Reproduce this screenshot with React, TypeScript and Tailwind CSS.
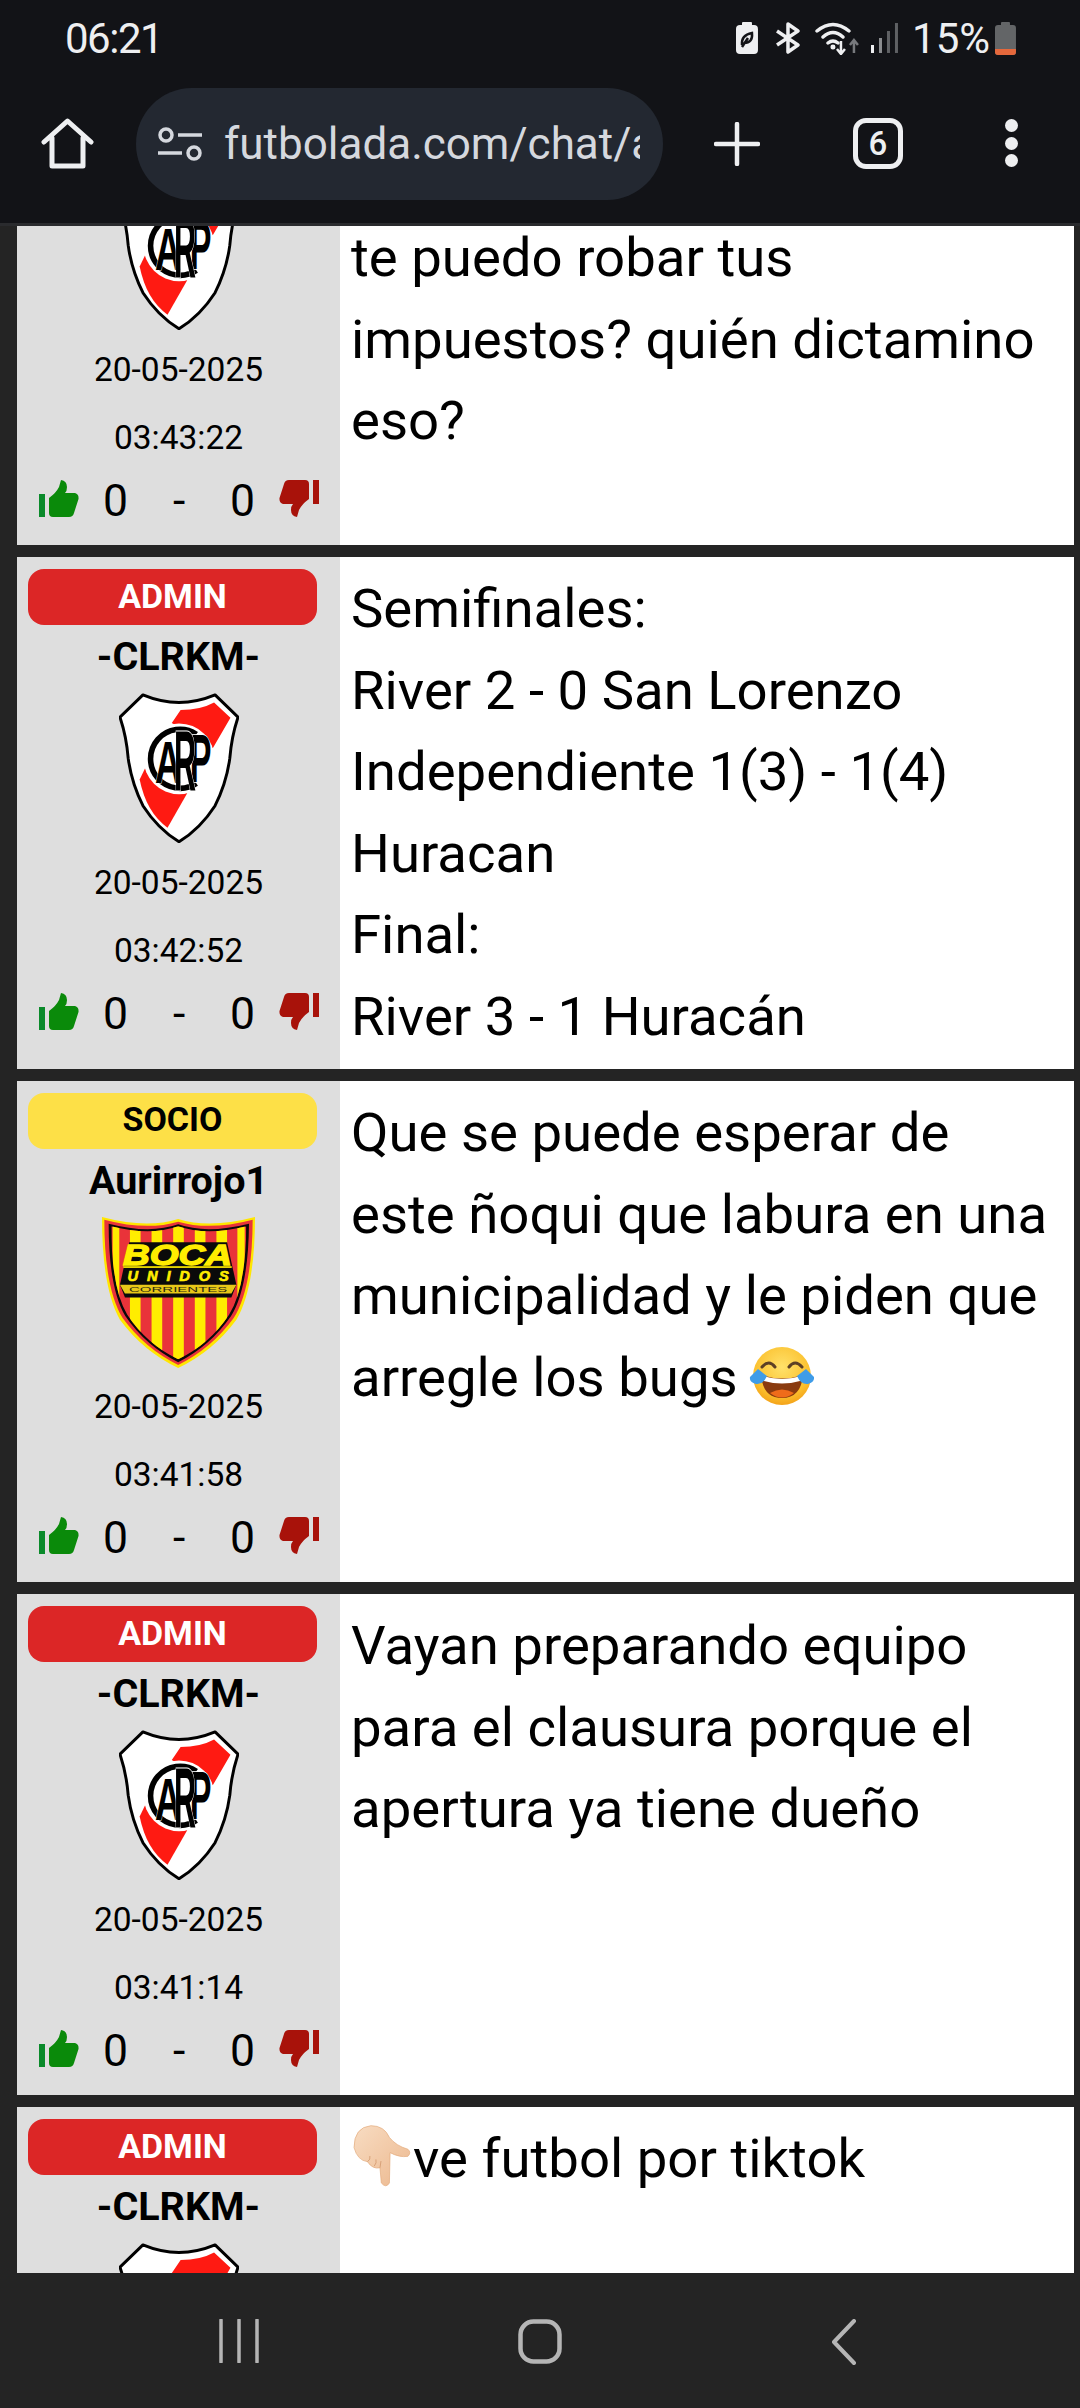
import React from 'react';

type Post = {
  role: 'ADMIN' | 'SOCIO';
  user: string;
  club: 'river' | 'boca';
  time: string;
  lines: React.ReactNode[];
  textTop?: string;
};

const RiverShield = () => (
  <svg width="120" height="150" viewBox="82 37 366 456">
    <path d="M155 42 Q265 88 375 42 L445 110 Q425 170 420 235 Q410 310 375 380 Q330 450 265 490 Q200 450 155 380 Q120 310 110 235 Q105 170 85 110 Z" fill="#fff" stroke="#000" strokeWidth="9" strokeLinejoin="round" />
    <path d="M270 88 Q330 88 372 65 L422 112 L368 205 L243 128 Z" fill="#ff1a12" />
    <path d="M162 265 L290 342 L230 447 Q165 400 145 300 Z" fill="#ff1a12" />
    <circle cx="265" cy="237" r="108" fill="#fff" />
    <path d="M318 162 A90 90 0 1 0 318 312" fill="none" stroke="#000" strokeWidth="17" />
    <g fontFamily="'Liberation Sans', sans-serif" fontWeight="700" fill="#000" stroke="#fff" strokeWidth="3" paintOrder="stroke">
      <text x="0" y="0" fontSize="150" transform="translate(192 310) scale(0.74 1.2)">A</text>
      <text x="0" y="0" fontSize="150" transform="translate(298 308) scale(0.66 1.4)">P</text>
      <text x="0" y="0" fontSize="150" transform="translate(250 332) scale(0.62 1.72)">R</text>
    </g>
  </svg>
);

const BocaShield = () => (
  <svg width="155" height="153" viewBox="33 33 466 460">
    <defs>
      <clipPath id="bocaInner">
        <path d="M64 64 Q180 94 265 64 Q350 94 470 64 Q468 250 418 330 Q360 418 265 464 Q170 418 112 330 Q64 250 64 64 Z" />
      </clipPath>
    </defs>
    <path d="M36 36 Q170 72 265 42 Q360 72 496 36 Q496 250 440 345 Q370 440 265 490 Q160 440 90 345 Q36 250 36 36 Z" fill="#ffe600" />
    <path d="M43 44 Q170 78 265 50 Q360 78 489 44 Q488 250 432 340 Q365 432 265 481 Q165 432 98 340 Q43 250 43 44 Z" fill="#e9333a" />
    <path d="M56 56 Q180 88 265 58 Q350 88 478 56 Q476 250 424 334 Q362 424 265 473 Q168 424 106 334 Q56 250 56 56 Z" fill="#0a0a0a" />
    <g clipPath="url(#bocaInner)">
      <rect x="60" y="60" width="420" height="420" fill="#e9333a" />
      <rect x="68" y="60" width="20" height="420" fill="#ffed00" />
      <rect x="120" y="60" width="32" height="420" fill="#ffed00" />
      <rect x="185" y="60" width="32" height="420" fill="#ffed00" />
      <rect x="250" y="60" width="32" height="420" fill="#ffed00" />
      <rect x="315" y="60" width="32" height="420" fill="#ffed00" />
      <rect x="380" y="60" width="32" height="420" fill="#ffed00" />
      <rect x="443" y="60" width="22" height="420" fill="#ffed00" />
    </g>
    <path d="M118 112 H412 L440 240 L425 278 H105 L90 240 Z" fill="#0a0a0a" />
    <rect x="100" y="184" width="326" height="5" fill="#ffed00" />
    <path d="M90 240 H440 L425 266 H105 Z" fill="#e8c818" />
    <g fontFamily="'Liberation Sans', sans-serif" fontWeight="700" fontStyle="italic" textAnchor="middle" fill="#ffed00" stroke="#ffed00">
      <text x="263" y="179" fontSize="88" strokeWidth="4" textLength="328" lengthAdjust="spacingAndGlyphs">BOCA</text>
      <text x="265" y="229" fontSize="44" strokeWidth="2" textLength="304" lengthAdjust="spacing">UNIDOS</text>
    </g>
    <text x="265" y="263" fontFamily="'Liberation Sans', sans-serif" fontSize="24" fill="#2a2a10" textAnchor="middle" textLength="296" lengthAdjust="spacingAndGlyphs">CORRIENTES</text>
  </svg>
);

const ThumbUp = () => (
  <svg width="40" height="37" viewBox="0 0 40 37">
    <rect x="0" y="14" width="6" height="23" fill="#0a8a2a" />
    <path d="M10 18 Q17 13 20 7 L22 0 Q28 1 28 7 Q28 11 26 13 L36 13 Q40 14 39.500 19 L35 33 Q34 37 30 37 L14 37 Q10 37 10 33 Z" fill="#0a8a0a" />
  </svg>
);

const ThumbDown = () => (
  <svg width="40" height="37" viewBox="0 0 40 37">
    <rect x="34" y="0" width="6" height="24" fill="#a8120a" />
    <path d="M30 19 Q23 24 20 30 L18 37 Q12 36 12 30 Q12 26 14 24 L4 24 Q0 23 0.500 18 L5 4 Q6 0 10 0 L26 0 Q30 0 30 4 Z" fill="#a8120a" />
  </svg>
);

const LaughEmoji = () => (
  <svg width="66" height="60" viewBox="0 0 66 60" className="-ml-[2px] inline-block align-[-10px]">
    <defs>
      <radialGradient id="laughFace" cx="50%" cy="35%" r="70%">
        <stop offset="0%" stopColor="#ffe16a" />
        <stop offset="70%" stopColor="#fbc02d" />
        <stop offset="100%" stopColor="#f29a14" />
      </radialGradient>
    </defs>
    <circle cx="33" cy="30" r="29" fill="url(#laughFace)" />
    <path d="M13 21 Q20 13 26 21 M40 21 Q46 13 53 21" fill="none" stroke="#5d4025" strokeWidth="3" strokeLinecap="round" />
    <path d="M12 29 Q33 36 54 29 Q52 52 33 52 Q14 52 12 29 Z" fill="#8a3b0f" />
    <path d="M14 30 Q33 36 52 30 L51 35 Q33 40 15 35 Z" fill="#fff" />
    <path d="M21 47 Q33 40 45 47 Q33 56 21 47 Z" fill="#ef6c1a" />
    <path d="M9 23 Q14 27 18 30 Q14 39 7 38 Q0 36 1 31 Z" fill="#3f9ce8" />
    <path d="M57 23 Q52 27 48 30 Q52 39 59 38 Q66 36 65 31 Z" fill="#3f9ce8" />
  </svg>
);

const HandEmoji = () => (
  <svg width="62" height="64" viewBox="70 80 176 190" className="inline-block align-[-11px]">
    <defs>
      <linearGradient id="handSkin" x1="0" y1="0" x2="1" y2="1">
        <stop offset="0%" stopColor="#f8dcc2" />
        <stop offset="100%" stopColor="#ecb88e" />
      </linearGradient>
    </defs>
    <path d="M75 150 Q75 90 125 85 Q165 85 180 120 Q200 145 235 155 Q246 165 235 176 Q210 180 182 165 L180 255 Q170 272 156 255 L152 210 Q130 215 115 192 Q85 188 75 150 Z" fill="url(#handSkin)" stroke="#e3a979" strokeWidth="2" />
    <path d="M115 192 Q125 185 122 175 M135 205 Q143 195 140 185 M152 210 L155 190" fill="none" stroke="#d39a6e" strokeWidth="2.500" />
  </svg>
);

const posts: Post[] = [
  {
    role: 'ADMIN',
    user: '-CLRKM-',
    club: 'river',
    time: '03:43:22',
    textTop: 'pt-[173px]',
    lines: ['te puedo robar tus', 'impuestos? quién dictamino', 'eso?'],
  },
  {
    role: 'ADMIN',
    user: '-CLRKM-',
    club: 'river',
    time: '03:42:52',
    lines: ['Semifinales:', 'River 2 - 0 San Lorenzo', 'Independiente 1(3) - 1(4)', 'Huracan', 'Final:', 'River 3 - 1 Huracán'],
  },
  {
    role: 'SOCIO',
    user: 'Aurirrojo1',
    club: 'boca',
    time: '03:41:58',
    lines: [
      'Que se puede esperar de',
      'este ñoqui que labura en una',
      'municipalidad y le piden que',
      <>arregle los bugs <LaughEmoji /></>,
    ],
  },
  {
    role: 'ADMIN',
    user: '-CLRKM-',
    club: 'river',
    time: '03:41:14',
    lines: ['Vayan preparando equipo', 'para el clausura porque el', 'apertura ya tiene dueño'],
  },
  {
    role: 'ADMIN',
    user: '-CLRKM-',
    club: 'river',
    time: '03:40:36',
    lines: [<><HandEmoji />ve futbol por tiktok</>],
  },
];

const PostCard = ({ post }: { post: Post }) => (
  <div className="flex w-[1057px] shrink-0 ml-[17px] bg-white">
    <div className="flex w-[323px] shrink-0 flex-col bg-[#dedede] pt-[12px] pb-[14px] text-black">
      <div className="ml-[11px] w-[289px]">
        {post.role === 'ADMIN' ? (
          <div className="flex h-[56px] items-center justify-center rounded-[16px] bg-[#dc2626] pb-[2px] text-[34px] font-bold text-white">ADMIN</div>
        ) : (
          <div className="flex h-[56px] items-center justify-center rounded-[16px] bg-[#fde047] pb-[3px] text-[34px] font-bold text-black">SOCIO</div>
        )}
      </div>
      <div className="flex h-[64px] items-center justify-center text-[39.500px] font-bold">{post.user}</div>
      <div className="flex h-[158px] items-center justify-center">
        {post.club === 'river' ? <RiverShield /> : <BocaShield />}
      </div>
      <div className="mt-[2px] mb-[1px] text-center text-[33.500px] leading-[67px]">20-05-2025</div>
      <div className="text-center text-[33.500px] leading-[67px]">{post.time}</div>
      <div className="relative h-[60px] text-[44.500px] leading-[60px]">
        <div className="absolute left-[22px] top-[9px]"><ThumbUp /></div>
        <span className="absolute left-[86px] top-0">0</span>
        <span className="absolute left-[156px] top-0">-</span>
        <span className="absolute left-[213px] top-0">0</span>
        <div className="absolute left-[262px] top-[9px]"><ThumbDown /></div>
      </div>
    </div>
    <div className={`flex-1 px-[11px] pb-[12px] text-[54.500px] leading-[81.500px] text-black ${post.textTop ?? 'pt-[11px]'}`}>
      {post.lines.map((line, i) => (
        <div key={i} className="whitespace-nowrap">{line}</div>
      ))}
    </div>
  </div>
);

const StatusBar = () => (
  <div className="flex h-[76px] items-center pl-[65px] pr-[64px] text-[42px] text-[#eeeff1]">
    <span className="w-[672px] tracking-[-1.500px]">06:21</span>
    <svg width="22" height="32" viewBox="0 0 22 32">
      <rect x="6" y="0" width="10" height="4" rx="1" fill="#eeeff1" />
      <rect x="0" y="3" width="22" height="29" rx="4" fill="#eeeff1" />
      <path d="M6 23 Q5 13 16 11 Q17 21 8 21 M6 25 L12 16" fill="none" stroke="#121317" strokeWidth="2.500" />
    </svg>
    <svg width="26" height="32" viewBox="0 0 26 32" className="ml-[17px]">
      <path d="M2 9 L23 23 L13 30 V2 L23 9 L2 23" fill="none" stroke="#eeeff1" strokeWidth="3.500" strokeLinejoin="round" />
    </svg>
    <svg width="46" height="34" viewBox="0 0 46 34" className="ml-[14px]">
      <path d="M2 10 Q18 -3 34 10 M8 16 Q18 7 28 16 M13 22 Q18 18 23 22" fill="none" stroke="#eeeff1" strokeWidth="3.500" strokeLinecap="round" />
      <circle cx="18" cy="26" r="2.500" fill="#eeeff1" />
      <path d="M26 20 V32 M22 28 L26 33 L30 28" fill="none" stroke="#eeeff1" strokeWidth="2.500" />
      <path d="M39 32 V20 M35 24 L39 19 L43 24" fill="none" stroke="#77797d" strokeWidth="2.500" />
    </svg>
    <svg width="28" height="30" viewBox="0 0 28 30" className="ml-[10px]">
      <rect x="0" y="22" width="3" height="8" fill="#eeeff1" />
      <rect x="8" y="15" width="3" height="15" fill="#8b8d90" />
      <rect x="16" y="8" width="3" height="22" fill="#5f6164" />
      <rect x="24" y="0" width="3" height="30" fill="#5f6164" />
    </svg>
    <span className="ml-[13px] w-[78px] whitespace-nowrap">15%</span>
    <svg width="21" height="33" viewBox="0 0 21 33" className="ml-[5px]">
      <rect x="6" y="0" width="9" height="4" rx="1" fill="#636567" />
      <rect x="0" y="3" width="21" height="30" rx="3" fill="#636567" />
      <path d="M0 27 H21 V30 Q21 33 18 33 H3 Q0 33 0 30 Z" fill="#e5683c" />
    </svg>
  </div>
);

const Toolbar = () => (
  <div className="relative flex h-[147px] items-start text-[#e6e8ec]">
    <svg width="53" height="51" viewBox="0 0 53 51" className="ml-[41px] mt-[42px]">
      <path d="M3 24 L26.500 3 L50 24 M11 20 V48 H42 V20" fill="none" stroke="#eeeff1" strokeWidth="5" strokeLinecap="round" strokeLinejoin="round" />
    </svg>
    <div className="ml-[42px] mt-[12px] flex h-[112px] w-[527px] items-center rounded-full bg-[#232831] pl-[22px]">
      <svg width="44" height="34" viewBox="0 0 44 34" className="shrink-0">
        <circle cx="8" cy="8" r="6" fill="none" stroke="#d5d8de" strokeWidth="3.500" />
        <path d="M20 8 H44 M0 26 H24" stroke="#d5d8de" strokeWidth="3.500" />
        <circle cx="36" cy="26" r="6" fill="none" stroke="#d5d8de" strokeWidth="3.500" />
      </svg>
      <div className="ml-[22px] w-[416px] overflow-hidden whitespace-nowrap text-[44px] text-[#d5d8de]">futbolada.com/chat/a</div>
    </div>
    <svg width="46" height="44" viewBox="0 0 46 44" className="ml-[51px] mt-[46px]">
      <path d="M23 2 V42 M2 22 H44" stroke="#eeeff1" strokeWidth="4.500" strokeLinecap="round" />
    </svg>
    <div className="ml-[93px] mt-[42px] flex h-[51px] w-[50px] items-center justify-center rounded-[13px] border-[5px] border-[#eeeff1] text-[33px] font-medium leading-none text-[#eeeff1]">6</div>
    <div className="ml-[102px] mt-[43px] flex h-[48px] flex-col justify-between">
      <span className="h-[13px] w-[13px] rounded-full bg-[#eeeff1]" />
      <span className="h-[13px] w-[13px] rounded-full bg-[#eeeff1]" />
      <span className="h-[13px] w-[13px] rounded-full bg-[#eeeff1]" />
    </div>
  </div>
);

const NavBar = () => (
  <div className="flex h-[135px] shrink-0 items-start bg-[#242424] pt-[46px]">
    <svg width="40" height="44" viewBox="0 0 40 44" className="ml-[219px]">
      <path d="M2 1 V43 M20 1 V43 M38 1 V43" stroke="#b5b5b5" strokeWidth="3.500" strokeLinecap="round" />
    </svg>
    <svg width="44" height="45" viewBox="0 0 44 45" className="ml-[259px]">
      <rect x="2.500" y="2.500" width="39" height="40" rx="13" fill="none" stroke="#b5b5b5" strokeWidth="4.500" />
    </svg>
    <svg width="26" height="46" viewBox="0 0 26 46" className="ml-[269px]">
      <path d="M23 2 L3 23 L23 44" fill="none" stroke="#b5b5b5" strokeWidth="4" strokeLinecap="round" strokeLinejoin="round" />
    </svg>
  </div>
);

const App: React.FC = () => {
  return (
    <div className="flex h-[2408px] w-[1080px] flex-col overflow-hidden bg-[#242424] font-['Roboto',sans-serif]">
      {/* --- Browser chrome --- */}
      <div className="h-[223px] shrink-0 bg-[#121317]">
        <StatusBar />
        <Toolbar />
      </div>
      <div className="h-[3px] shrink-0 bg-[#2a2b2e]" />

      {/* --- Chat list, scrolled so the first post is cut by the toolbar --- */}
      <div className="min-h-0 flex-1 overflow-hidden">
        <div className="mt-[-182px] flex flex-col gap-[12px]">
          {posts.map((post) => (
            <PostCard key={post.time} post={post} />
          ))}
        </div>
      </div>

      <NavBar />
    </div>
  );
};

export default App;
